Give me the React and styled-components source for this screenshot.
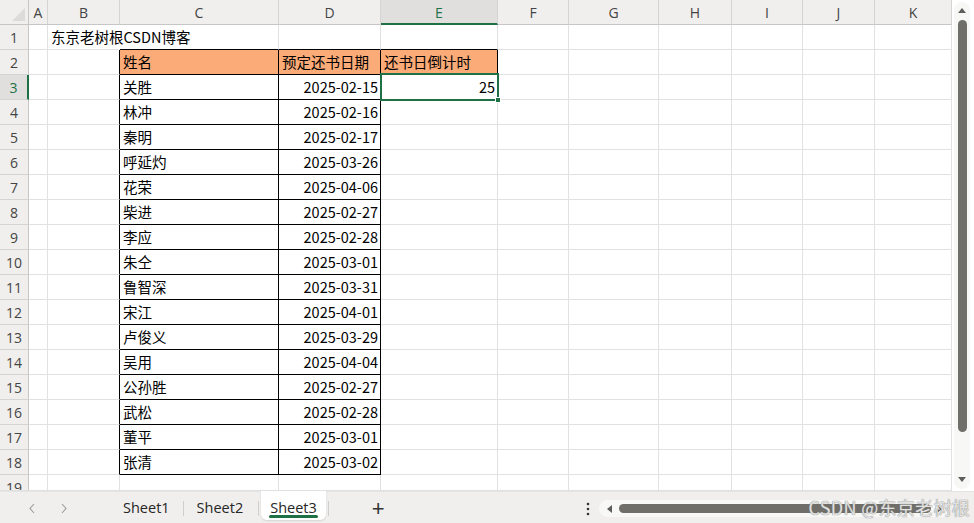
import styled, { createGlobalStyle } from "styled-components";

const GlobalStyle = createGlobalStyle`
  html, body { margin: 0; padding: 0; background: #f0efed; }
  * { box-sizing: border-box; }
`;

const GRID = "#e1e1e1";
const HEAD_LINE = "#d4d4d4";
const GREEN = "#1e7145";
const BLACK = "#000";
const ORANGE = "#fbab77";

const columns = [
  { key: "A", w: 19 },
  { key: "B", w: 72 },
  { key: "C", w: 159 },
  { key: "D", w: 102 },
  { key: "E", w: 117 },
  { key: "F", w: 71 },
  { key: "G", w: 90 },
  { key: "H", w: 73 },
  { key: "I", w: 71 },
  { key: "J", w: 72 },
  { key: "K", w: 77 },
];

const books = [
  ["关胜", "2025-02-15"],
  ["林冲", "2025-02-16"],
  ["秦明", "2025-02-17"],
  ["呼延灼", "2025-03-26"],
  ["花荣", "2025-04-06"],
  ["柴进", "2025-02-27"],
  ["李应", "2025-02-28"],
  ["朱仝", "2025-03-01"],
  ["鲁智深", "2025-03-31"],
  ["宋江", "2025-04-01"],
  ["卢俊义", "2025-03-29"],
  ["吴用", "2025-04-04"],
  ["公孙胜", "2025-02-27"],
  ["武松", "2025-02-28"],
  ["董平", "2025-03-01"],
  ["张清", "2025-03-02"],
];

const Page = styled.div`
  width: 974px;
  height: 523px;
  display: flex;
  flex-direction: column;
  background: #f0efed;
  overflow: hidden;
  position: relative;
`;

const Top = styled.div`
  display: flex;
  height: 491px;
  background: #fff;
`;

const Sheet = styled.div`
  display: grid;
  grid-template-columns: 29px ${columns.map((c) => c.w + "px").join(" ")};
  grid-auto-rows: 25px;
  width: 952px;
  height: 491px;
  overflow: hidden;
  background: #fff;
  border-bottom: 1px solid ${GRID};
`;

const Corner = styled.div`
  background: #f0efed;
  border-right: 1px solid #c6c6c6;
  border-bottom: 1px solid #c6c6c6;
  display: flex;
  align-items: flex-end;
  justify-content: flex-end;
  padding: 0 3px 3px 0;
`;

const ColHead = styled.div`
  background: ${(p) => (p.$active ? "#e1dfdd" : "#f0efed")};
  border-right: 1px solid ${HEAD_LINE};
  border-bottom: ${(p) => (p.$active ? `2px solid ${GREEN}` : "1px solid #c6c6c6")};
  display: flex;
  align-items: center;
  justify-content: center;
  font-family: "Open Sans", "Noto Sans", sans-serif;
  font-size: 14px;
  color: ${(p) => (p.$active ? GREEN : "#444")};
  padding-top: ${(p) => (p.$active ? "1px" : "0")};
`;

const RowHead = styled.div`
  background: ${(p) => (p.$active ? "#e1dfdd" : "#f0efed")};
  border-right: ${(p) => (p.$active ? `2px solid ${GREEN}` : "1px solid #c6c6c6")};
  border-bottom: 1px solid ${HEAD_LINE};
  display: flex;
  align-items: center;
  justify-content: center;
  font-family: "Open Sans", "Noto Sans", sans-serif;
  font-size: 14px;
  color: ${(p) => (p.$active ? GREEN : "#444")};
`;

const Cell = styled.div`
  position: relative;
  border-right: 1px solid ${(p) => p.$rc || GRID};
  border-bottom: 1px solid ${(p) => p.$bc || GRID};
  background: ${(p) => p.$fill || "transparent"};
  display: flex;
  align-items: center;
  justify-content: ${(p) => (p.$num ? "flex-end" : "flex-start")};
  padding: 0 2px 1px 3px;
  font-family: "Noto Sans CJK SC", "Noto Sans", sans-serif;
  font-size: 14.5px;
  color: #000;
  white-space: nowrap;
  overflow: visible;
  z-index: ${(p) => (p.$selected ? 2 : "auto")};
  ${(p) => p.$noRight && "border-right-color: transparent;"}
  ${(p) =>
    p.$selected &&
    `
    &::after {
      content: "";
      position: absolute;
      top: -2px; left: -1px; right: -2px; bottom: -2px;
      border: 2px solid ${GREEN};
      pointer-events: none;
    }
  `}
`;

const FillHandle = styled.span`
  position: absolute;
  right: -4px;
  bottom: -4px;
  width: 6px;
  height: 6px;
  background: ${GREEN};
  border: 1px solid #fff;
  z-index: 3;
`;

const VScroll = styled.div`
  width: 22px;
  background: #fff;
  padding: 2px 4px 2px 2px;
  display: flex;
`;

const VTrack = styled.div`
  flex: 1;
  background: #f7f7f6;
  border-radius: 8px;
  display: flex;
  flex-direction: column;
  align-items: center;
  padding: 4px 0 4px;
`;

const VThumb = styled.div`
  width: 9px;
  height: 412px;
  margin-top: 4px;
  border-radius: 5px;
  background: #6f6e69;
`;

const Spacer = styled.div`
  flex: 1;
`;

const Bar = styled.div`
  height: 32px;
  display: flex;
  align-items: center;
  background: #f0efed;
  border-top: 1px solid #e4e4e4;
`;

const Nav = styled.div`
  display: flex;
  gap: 24px;
  padding-left: 28px;
  padding-top: 2px;
  width: 110px;
`;

const Tab = styled.div`
  position: relative;
  align-self: stretch;
  display: flex;
  align-items: center;
  justify-content: center;
  padding: 3px ${(p) => (p.$active ? "9px" : "13px")} 0;
  font-family: "Open Sans", "Noto Sans", sans-serif;
  font-size: 14.5px;
  color: #262626;
  background: ${(p) => (p.$active ? "#fff" : "transparent")};
  border-radius: 0 0 6px 6px;
  margin-top: -1px;
  margin-bottom: 3px;
  ${(p) =>
    p.$active &&
    `
    box-shadow: 0 1px 2px rgba(0,0,0,0.12);
    &::after {
      content: "";
      position: absolute;
      left: 8px; right: 8px; bottom: 2px;
      height: 3px;
      border-radius: 2px;
      background: ${GREEN};
    }
  `}
`;

const Sep = styled.div`
  width: 1px;
  height: 15px;
  margin-top: 2px;
  background: #cfcfcf;
  margin-left: ${(p) => p.$m || 0}px;
  margin-right: ${(p) => p.$m || 0}px;
`;

const AddBtn = styled.div`
  margin-left: 41px;
  margin-top: 3px;
  font-family: "Liberation Sans", sans-serif;
  font-size: 22px;
  font-weight: 300;
  color: #333;
  line-height: 1;
`;

const More = styled.div`
  margin-left: 196px;
  margin-top: 2px;
  width: 14px;
  display: flex;
  justify-content: center;
`;

const HScroll = styled.div`
  margin-left: 4px;
  margin-top: 2px;
  width: 352px;
  height: 17px;
  background: #f8f8f7;
  border-radius: 9px;
  display: flex;
  align-items: center;
  padding: 0 6px 0 6px;
  gap: 4px;
`;

const HThumb = styled.div`
  flex: 1;
  height: 9px;
  border-radius: 5px;
  background: #6f6e69;
`;

const Watermark = styled.div`
  position: absolute;
  right: 4px;
  bottom: 3px;
  font-family: "Noto Sans CJK SC", "Noto Sans", sans-serif;
  font-size: 18px;
  letter-spacing: 0.3px;
  color: rgba(255, 255, 255, 0.75);
  text-shadow: 0 0 1px #8a8a8a, 0 0 1px #8a8a8a;
  pointer-events: none;
`;

function Tri({ dir }) {
  const pts = {
    up: "1,7 5,2 9,7",
    down: "1,2 5,7 9,2",
    left: "7,1 2,5 7,9",
    right: "2,1 7,5 2,9",
  }[dir];
  return (
    <svg width="10" height="10" viewBox="0 0 10 10">
      <polygon points={pts} fill="#5f5e5a" />
    </svg>
  );
}

function Chevron({ dir }) {
  const d = dir === "left" ? "M6 1 L2 5.5 L6 10" : "M2 1 L6 5.5 L2 10";
  return (
    <svg width="8" height="11" viewBox="0 0 8 11">
      <path d={d} fill="none" stroke="#9a9a9a" strokeWidth="1.1" />
    </svg>
  );
}

function cellProps(r, key) {
  // table: header C2:E2, body C3:D18
  const p = {};
  const inHead = r === 2 && ["C", "D", "E"].includes(key);
  const inBody = r >= 3 && r <= 18 && ["C", "D"].includes(key);
  if (inHead || inBody) {
    p.$rc = BLACK;
    p.$bc = BLACK;
  }
  if (inHead) p.$fill = ORANGE;
  if (key === "B" && r >= 2 && r <= 18) p.$rc = BLACK;
  if (r === 1 && ["C", "D", "E"].includes(key)) p.$bc = BLACK;
  if (r === 1 && key === "B") p.$noRight = true;
  if (r === 3 && key === "E") p.$selected = true;
  return p;
}

function cellText(r, key) {
  if (r === 1 && key === "B") return "东京老树根CSDN博客";
  if (r === 2 && key === "C") return "姓名";
  if (r === 2 && key === "D") return "预定还书日期";
  if (r === 2 && key === "E") return "还书日倒计时";
  if (r === 3 && key === "E") return "25";
  const b = books[r - 3];
  if (b && key === "C") return b[0];
  if (b && key === "D") return b[1];
  return "";
}

export default function App() {
  const rows = Array.from({ length: 19 }, (_, i) => i + 1);
  return (
    <Page>
      <GlobalStyle />
      <Top>
        <Sheet>
          <Corner>
            <svg width="13" height="13" viewBox="0 0 13 13">
              <polygon points="13,0 13,13 0,13" fill="#dcdbd9" />
            </svg>
          </Corner>
          {columns.map((c) => (
            <ColHead key={c.key} $active={c.key === "E"}>
              {c.key}
            </ColHead>
          ))}
          {rows.map((r) => [
            <RowHead key={"h" + r} $active={r === 3}>
              {r}
            </RowHead>,
            ...columns.map((c) => {
              const p = cellProps(r, c.key);
              const txt = cellText(r, c.key);
              const num = (c.key === "D" && r > 2) || (c.key === "E" && r === 3);
              return (
                <Cell key={c.key + r} {...p} $num={num}>
                  {txt}
                  {p.$selected && <FillHandle />}
                </Cell>
              );
            }),
          ])}
        </Sheet>
        <VScroll>
          <VTrack>
            <Tri dir="up" />
            <VThumb />
            <Spacer />
            <Tri dir="down" />
          </VTrack>
        </VScroll>
      </Top>
      <Bar>
        <Nav>
          <Chevron dir="left" />
          <Chevron dir="right" />
        </Nav>
        <Tab>Sheet1</Tab>
        <Sep $m={0} />
        <Tab>Sheet2</Tab>
        <Sep $m={2} />
        <Tab $active>Sheet3</Tab>
        <Sep $m={2} />
        <AddBtn>+</AddBtn>
        <More>
          <svg width="4" height="14" viewBox="0 0 4 14">
            <circle cx="2" cy="2" r="1.3" fill="#333" />
            <circle cx="2" cy="7" r="1.3" fill="#333" />
            <circle cx="2" cy="12" r="1.3" fill="#333" />
          </svg>
        </More>
        <HScroll>
          <Tri dir="left" />
          <HThumb />
          <Tri dir="right" />
        </HScroll>
      </Bar>
      <Watermark>CSDN @东京老树根</Watermark>
    </Page>
  );
}
